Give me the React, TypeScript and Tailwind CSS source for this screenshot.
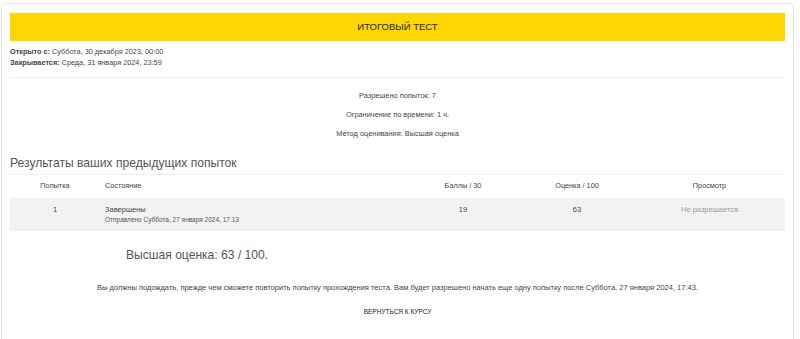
export default function App() {
  const font = { fontFamily: '"Liberation Sans", Arial, sans-serif' };

  return (
    <div className="bg-white w-[800px] h-[339px] overflow-hidden pt-[3px] pl-[1px]" style={font}>
      <div className="w-[793px] h-[360px] border border-[#e4e4e4] rounded-md px-[8px] pt-[9px]">
        {/* Title bar */}
        <div className="h-[28px] bg-[#ffd600] flex items-center justify-center text-[9.5px] text-[#222]">
          ИТОГОВЫЙ ТЕСТ
        </div>

        {/* Dates */}
        <div className="mt-[5px] text-[7.3px] leading-[11px] text-[#444]">
          <div>
            <span className="font-bold">Открыто с:</span> Суббота, 30 декабря 2023, 00:00
          </div>
          <div>
            <span className="font-bold">Закрывается:</span> Среда, 31 января 2024, 23:59
          </div>
        </div>

        <div className="mt-[9px] border-t border-[#eeeeee]" />

        {/* Quiz info */}
        <div className="mt-[12px] flex flex-col items-center gap-[8px] text-[7.4px] leading-[11px] text-[#444]">
          <div>Разрешено попыток: 7</div>
          <div>Ограничение по времени: 1 ч.</div>
          <div>Метод оценивания: Высшая оценка</div>
        </div>

        {/* Previous attempts */}
        <h3 className="mt-[16px] text-[12.1px] leading-[16px] text-[#555] font-normal">
          Результаты ваших предыдущих попыток
        </h3>

        <div className="mt-[3px] border-t border-[#eeeeee]">
          <div className="flex h-[23px] items-center text-[7.3px] text-[#444]">
            <div className="w-[90px] text-center">Попытка</div>
            <div className="w-[306px] pl-[5px]">Состояние</div>
            <div className="w-[114px] text-center">Баллы / 30</div>
            <div className="w-[114px] text-center">Оценка / 100</div>
            <div className="flex-1 text-center">Просмотр</div>
          </div>
          <div className="flex h-[33px] bg-[#f2f2f2] text-[7.5px] text-[#444] pt-[7px]">
            <div className="w-[90px] text-center leading-[10px]">1</div>
            <div className="w-[306px] pl-[5px] leading-[10px]">
              <div>Завершены</div>
              <div className="text-[6.5px] text-[#555]">Отправлено Суббота, 27 января 2024, 17:13</div>
            </div>
            <div className="w-[114px] text-center leading-[10px]">19</div>
            <div className="w-[114px] text-center leading-[10px]">63</div>
            <div className="flex-1 text-center leading-[10px] text-[#999]">Не разрешается</div>
          </div>
        </div>

        <div className="mt-[16px] pl-[116px] text-[12.1px] leading-[16px] text-[#555]">
          Высшая оценка: 63 / 100.
        </div>

        <div className="mt-[19px] text-center text-[7.5px] leading-[11px] text-[#444]">
          Вы должны подождать, прежде чем сможете повторить попытку прохождения теста. Вам будет разрешено начать еще одну попытку после Суббота, 27 января 2024, 17:43.
        </div>

        <div className="mt-[14px] text-center text-[6.5px] leading-[10px] text-[#222]">
          ВЕРНУТЬСЯ К КУРСУ
        </div>
      </div>
    </div>
  );
}
